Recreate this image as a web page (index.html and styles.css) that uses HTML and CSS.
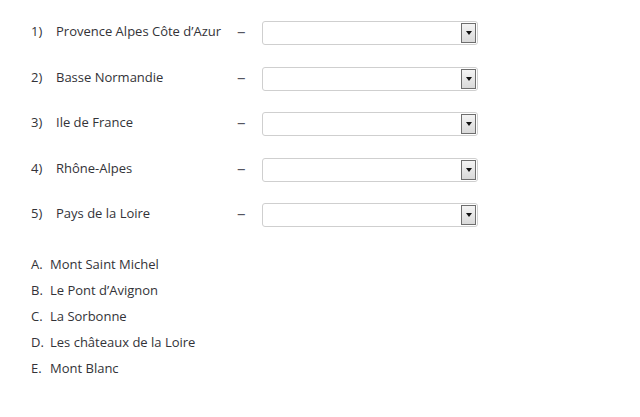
FILE: index.html
```html
<!DOCTYPE html>
<html>
<head>
<meta charset="utf-8">
<link rel="stylesheet" href="styles.css">
</head>
<body>
<div class="page">
  <div class="matches">
    <span class="num">1)</span><span class="label">Provence Alpes Côte d’Azur</span><span class="dash">–</span><div class="select"><span class="btn"><span class="tri"></span></span></div>
    <span class="num">2)</span><span class="label">Basse Normandie</span><span class="dash">–</span><div class="select"><span class="btn"><span class="tri"></span></span></div>
    <span class="num">3)</span><span class="label">Ile de France</span><span class="dash">–</span><div class="select"><span class="btn"><span class="tri"></span></span></div>
    <span class="num">4)</span><span class="label">Rhône-Alpes</span><span class="dash">–</span><div class="select"><span class="btn"><span class="tri"></span></span></div>
    <span class="num">5)</span><span class="label">Pays de la Loire</span><span class="dash">–</span><div class="select"><span class="btn"><span class="tri"></span></span></div>
  </div>
  <ul class="options">
    <li><span class="letter">A.</span>Mont Saint Michel</li>
    <li><span class="letter">B.</span>Le Pont d’Avignon</li>
    <li><span class="letter">C.</span>La Sorbonne</li>
    <li><span class="letter">D.</span>Les châteaux de la Loire</li>
    <li><span class="letter">E.</span>Mont Blanc</li>
  </ul>
</div>
</body>
</html>
```

FILE: styles.css
```css
html, body {
  margin: 0;
  padding: 0;
  background: #ffffff;
}
body {
  font-family: "Open Sans", "DejaVu Sans", sans-serif;
  font-size: 13px;
  color: #333338;
}
.page {
  padding: 21px 0 0 31px;
}
.matches {
  display: grid;
  grid-template-columns: 25px 181px 25px 216px;
  grid-auto-rows: 24px;
  row-gap: 21.5px;
  align-items: center;
}
.num, .label {
  line-height: 16px;
  margin-top: -4px;
}
.dash {
  font-size: 17px;
  line-height: 16px;
  margin-top: -4px;
  color: #555560;
}
.select {
  box-sizing: border-box;
  height: 24px;
  border: 1px solid #cfcfcf;
  border-radius: 3px;
  background: #fff;
  display: flex;
  justify-content: flex-end;
  align-items: center;
  padding-right: 1px;
}
.btn {
  box-sizing: border-box;
  width: 15px;
  height: 20px;
  border: 1px solid #6e6e6e;
  background: linear-gradient(#f4f4f4, #d9d9d9);
  display: flex;
  align-items: center;
  justify-content: center;
}
.tri {
  width: 0;
  height: 0;
  border-left: 3.5px solid transparent;
  border-right: 3.5px solid transparent;
  border-top: 4px solid #111;
}
.options {
  list-style: none;
  margin: 24px 0 0 0;
  padding: 0;
}
.options li {
  height: 26px;
  line-height: 26px;
}
.letter {
  display: inline-block;
  width: 19px;
}
```
